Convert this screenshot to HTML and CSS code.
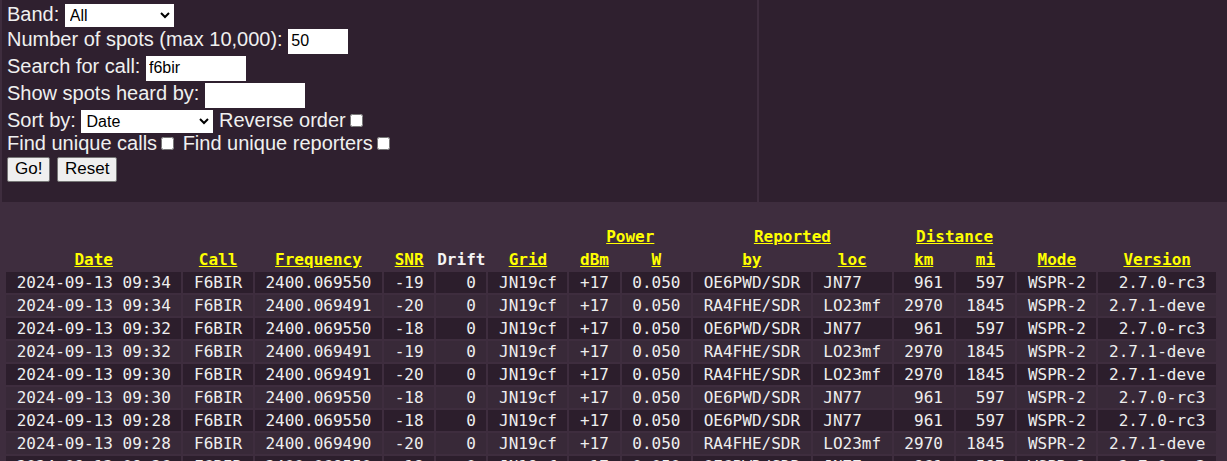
FILE: index.html
```html
<!DOCTYPE html>
<html>
<head>
<meta charset="utf-8">
<title>WSPR spots</title>
<link rel="stylesheet" href="styles.css">
</head>
<body>
<div class="top">
  <div class="cell cell-form">
    <form class="form">
      <div class="line l1">Band: <select class="sel sel-band"><option>All</option></select></div>
      <div class="line l2">Number of spots (max 10,000): <input class="inp inp-count" type="text" value="50"></div>
      <div class="line l3">Search for call: <input class="inp inp-call" type="text" value="f6bir"></div>
      <div class="line l4">Show spots heard by: <input class="inp inp-call" type="text" value=""></div>
      <div class="line l5">Sort by: <select class="sel sel-sort"><option>Date</option></select> Reverse order<input class="chk" type="checkbox"></div>
      <div class="line l6">Find unique calls<input class="chk" type="checkbox"> Find unique reporters<input class="chk" type="checkbox"></div>
      <div class="line l7"><button class="btn" type="button">Go!</button> <button class="btn" type="button">Reset</button></div>
    </form>
  </div>
  <div class="cell cell-side"></div>
</div>

<table class="spots">
  <thead>
    <tr>
      <th></th><th></th><th></th><th></th><th></th><th></th>
      <th colspan="2"><a href="#">Power</a></th>
      <th colspan="2"><a href="#">Reported</a></th>
      <th colspan="2"><a href="#">Distance</a></th>
      <th></th><th></th>
    </tr>
    <tr>
      <th><a href="#">Date</a></th>
      <th><a href="#">Call</a></th>
      <th><a href="#">Frequency</a></th>
      <th><a href="#">SNR</a></th>
      <th class="plain">Drift</th>
      <th><a href="#">Grid</a></th>
      <th><a href="#">dBm</a></th>
      <th><a href="#">W</a></th>
      <th><a href="#">by</a></th>
      <th><a href="#">loc</a></th>
      <th><a href="#">km</a></th>
      <th><a href="#">mi</a></th>
      <th><a href="#">Mode</a></th>
      <th><a href="#">Version</a></th>
    </tr>
  </thead>
  <tbody>
    <tr><td> 2024-09-13 09:34 </td><td> F6BIR </td><td> 2400.069550 </td><td> -19 </td><td>   0 </td><td> JN19cf </td><td> +17 </td><td> 0.050 </td><td> OE6PWD/SDR </td><td> JN77   </td><td>  961 </td><td>  597 </td><td> WSPR-2 </td><td>  2.7.0-rc3 </td></tr>
    <tr><td> 2024-09-13 09:34 </td><td> F6BIR </td><td> 2400.069491 </td><td> -20 </td><td>   0 </td><td> JN19cf </td><td> +17 </td><td> 0.050 </td><td> RA4FHE/SDR </td><td> LO23mf </td><td> 2970 </td><td> 1845 </td><td> WSPR-2 </td><td> 2.7.1-deve </td></tr>
    <tr><td> 2024-09-13 09:32 </td><td> F6BIR </td><td> 2400.069550 </td><td> -18 </td><td>   0 </td><td> JN19cf </td><td> +17 </td><td> 0.050 </td><td> OE6PWD/SDR </td><td> JN77   </td><td>  961 </td><td>  597 </td><td> WSPR-2 </td><td>  2.7.0-rc3 </td></tr>
    <tr><td> 2024-09-13 09:32 </td><td> F6BIR </td><td> 2400.069491 </td><td> -19 </td><td>   0 </td><td> JN19cf </td><td> +17 </td><td> 0.050 </td><td> RA4FHE/SDR </td><td> LO23mf </td><td> 2970 </td><td> 1845 </td><td> WSPR-2 </td><td> 2.7.1-deve </td></tr>
    <tr><td> 2024-09-13 09:30 </td><td> F6BIR </td><td> 2400.069491 </td><td> -20 </td><td>   0 </td><td> JN19cf </td><td> +17 </td><td> 0.050 </td><td> RA4FHE/SDR </td><td> LO23mf </td><td> 2970 </td><td> 1845 </td><td> WSPR-2 </td><td> 2.7.1-deve </td></tr>
    <tr><td> 2024-09-13 09:30 </td><td> F6BIR </td><td> 2400.069550 </td><td> -18 </td><td>   0 </td><td> JN19cf </td><td> +17 </td><td> 0.050 </td><td> OE6PWD/SDR </td><td> JN77   </td><td>  961 </td><td>  597 </td><td> WSPR-2 </td><td>  2.7.0-rc3 </td></tr>
    <tr><td> 2024-09-13 09:28 </td><td> F6BIR </td><td> 2400.069550 </td><td> -18 </td><td>   0 </td><td> JN19cf </td><td> +17 </td><td> 0.050 </td><td> OE6PWD/SDR </td><td> JN77   </td><td>  961 </td><td>  597 </td><td> WSPR-2 </td><td>  2.7.0-rc3 </td></tr>
    <tr><td> 2024-09-13 09:28 </td><td> F6BIR </td><td> 2400.069490 </td><td> -20 </td><td>   0 </td><td> JN19cf </td><td> +17 </td><td> 0.050 </td><td> RA4FHE/SDR </td><td> LO23mf </td><td> 2970 </td><td> 1845 </td><td> WSPR-2 </td><td> 2.7.1-deve </td></tr>
    <tr><td> 2024-09-13 09:26 </td><td> F6BIR </td><td> 2400.069550 </td><td> -18 </td><td>   0 </td><td> JN19cf </td><td> +17 </td><td> 0.050 </td><td> OE6PWD/SDR </td><td> JN77   </td><td>  961 </td><td>  597 </td><td> WSPR-2 </td><td>  2.7.0-rc3 </td></tr>
  </tbody>
</table>
</body>
</html>
```
FILE: styles.css
```css
html, body {
  margin: 0;
  padding: 0;
  background: #3e2d3e;
  color: #f0f0f0;
  font-family: "Liberation Sans", Arial, sans-serif;
  font-size: 20px;
}

.top {
  display: flex;
  gap: 2px;
  padding-left: 2px;
  height: 202px;
  background: #3e2d3e;
}

.cell {
  background: #2f202f;
}

.cell-form {
  width: 755px;
  padding-left: 5px;
  box-sizing: border-box;
}

.cell-side {
  flex: 1;
}

.form {
  padding-top: 3px;
}

.line {
  white-space: nowrap;
}

.l1 { height: 25px; }
.l2 { height: 27px; }
.l3 { height: 27px; }
.l4 { height: 27px; }
.l5 { height: 23px; }
.l6 { height: 24px; }
.l7 { height: 27px; }

.inp {
  box-sizing: border-box;
  height: 25px;
  border: 1px solid #fff;
  padding: 1px 2px;
  background: #fff;
  color: #000;
  font-family: "Liberation Sans", Arial, sans-serif;
  font-size: 16px;
  margin: 0;
  outline: none;
}

.inp-count { width: 60px; }
.inp-call { width: 100px; }

.sel {
  box-sizing: border-box;
  height: 23px;
  border: 1px solid #fff;
  border-radius: 0;
  background: #fff;
  color: #000;
  font-family: "Liberation Sans", Arial, sans-serif;
  font-size: 16px;
  margin: 0;
}

.sel-band { width: 109px; }
.sel-sort { width: 132px; }

.chk {
  width: 13px;
  height: 13px;
  margin: 3px 3px 3px 4px;
}

.btn {
  box-sizing: border-box;
  height: 25px;
  padding: 1px 7px;
  font-family: "Liberation Sans", Arial, sans-serif;
  font-size: 17px;
  color: #000;
  background: #efefef;
  border: 1px solid #767676;
  border-radius: 2px;
  margin: 0 1px 0 0;
}

.spots {
  margin: 22px 0 0 4px;
  border-spacing: 2px;
  font-family: "DejaVu Sans Mono", monospace;
  font-size: 16px;
  line-height: 19px;
}

.spots th,
.spots td {
  padding: 1px;
  white-space: pre;
}

.spots th {
  text-align: center;
  font-weight: bold;
}

.spots th a {
  color: #ffff00;
  text-decoration: underline;
}

.spots th.plain {
  color: #f4f4f4;
}

.spots td {
  text-align: left;
  color: #eeeeee;
}

.spots tbody tr:nth-child(odd) td {
  background: #2c1e2c;
}

.spots tbody tr:nth-child(even) td {
  background: #382938;
}
```
